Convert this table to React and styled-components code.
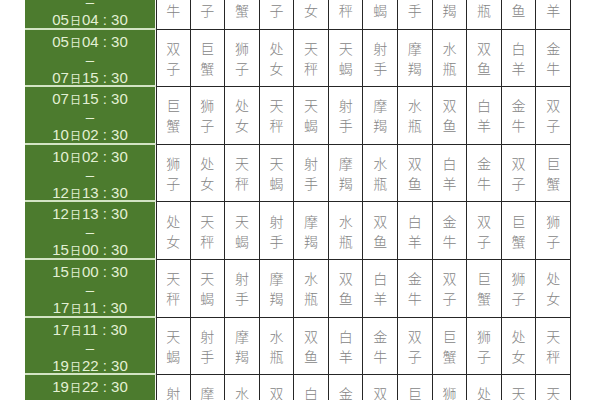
import React from "react";
import styled, { createGlobalStyle } from "styled-components";

const GlobalStyle = createGlobalStyle`
  html, body {
    margin: 0;
    padding: 0;
    background: #ffffff;
  }
`;

const signs = ["白羊", "金牛", "双子", "巨蟹", "狮子", "处女", "天秤", "天蝎", "射手", "摩羯", "水瓶", "双鱼"];
const times = ["02日17:30", "05日04:30", "07日15:30", "10日02:30", "12日13:30", "15日00:30", "17日11:30", "19日22:30", "22日09:30"];

const Frame = styled.div`
  width: 600px;
  height: 400px;
  overflow: hidden;
  background: #fff;
`;

const Table = styled.div`
  display: grid;
  grid-template-columns: 131px repeat(12, 1fr);
  grid-auto-rows: 57.6px;
  width: 546px;
  margin: -28px 0 0 25px;
`;

const TimeCell = styled.div`
  background: #4c7b2e;
  border-bottom: 2px solid #d3e4c4;
  border-right: 1px solid #f4f8f0;
  display: flex;
  flex-direction: column;
  align-items: center;
  justify-content: space-between;
  padding: 3px 0 0;
  box-sizing: border-box;
  color: #e3f0d4;
  font-family: "Liberation Sans", Arial, "Noto Sans CJK SC", sans-serif;
  font-size: 15px;
  line-height: 18px;
`;

const Day = styled.span`
  font-family: "Noto Sans CJK SC", sans-serif;
  font-size: 11px;
  margin: 0 1px;
`;

const SignCell = styled.div`
  border-right: 1.5px solid #262626;
  border-bottom: 1.5px solid #262626;
  border-left: ${({ $first }) => ($first ? "1.5px solid #262626" : "none")};
  box-sizing: border-box;
  display: flex;
  flex-direction: column;
  align-items: center;
  justify-content: center;
  gap: 2px;
  color: #858585;
  font-family: "Noto Sans CJK SC", sans-serif;
  font-size: 14px;
  font-weight: 300;
  line-height: 18px;
`;

const Time = ({ value }) => {
  const [d, t] = value.split("日");
  return (
    <span>
      {d}
      <Day>日</Day>
      {t.replace(":", " : ")}
    </span>
  );
};

export default function App() {
  return (
    <Frame>
      <GlobalStyle />
      <Table>
        {times.slice(0, 8).map((start, r) => (
          <React.Fragment key={start}>
            <TimeCell>
              <Time value={start} />
              <span>–</span>
              <Time value={times[r + 1]} />
            </TimeCell>
            {signs.map((_, c) => {
              const name = signs[(r + 1 + c) % 12];
              return (
                <SignCell key={c} $first={c === 0}>
                  <span>{name[0]}</span>
                  <span>{name[1]}</span>
                </SignCell>
              );
            })}
          </React.Fragment>
        ))}
      </Table>
    </Frame>
  );
}
